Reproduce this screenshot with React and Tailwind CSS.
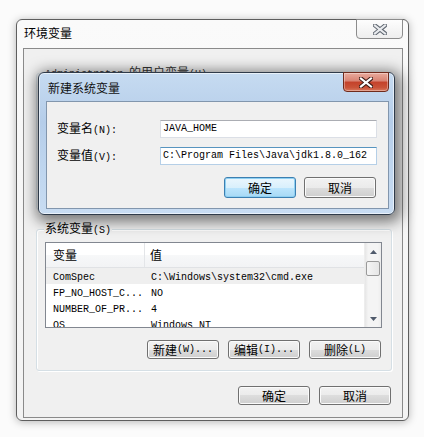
import React from "react";

function M({ children }) {
  return <span className="font-['Liberation_Mono',monospace] text-[10px]">{children}</span>;
}

function XGlyph({ light }) {
  return (
    <svg width="14" height="11" viewBox="0 0 14 11">
      <path d="M2 1.5 L12 9.5 M12 1.5 L2 9.5" stroke={light ? "#5f6670" : "#3b1a14"} strokeWidth="4.2" strokeLinecap="square" fill="none" />
      <path d="M2 1.5 L12 9.5 M12 1.5 L2 9.5" stroke={light ? "#e9ebee" : "#ffffff"} strokeWidth="2.2" strokeLinecap="square" fill="none" />
    </svg>
  );
}

function Arrow({ down }) {
  return (
    <svg width="7" height="4" viewBox="0 0 7 4">
      <path d={down ? "M0 0 L7 0 L3.5 4 Z" : "M0 4 L3.5 0 L7 4 Z"} fill="#4f5a6b" />
    </svg>
  );
}

function Btn({ children, w = "w-[72px]", h = "h-[19px]", primary }) {
  return (
    <div
      className={
        primary
          ? `${w} ${h} flex items-center justify-center rounded-[3px] border border-[#3c7fb1] bg-[linear-gradient(#eaf6fd_0%,#d9f0fc_50%,#bee6fd_50%,#a7d9f5_100%)] shadow-[inset_0_0_0_1px_#8fd0f2]`
          : `${w} ${h} flex items-center justify-center rounded-[3px] border border-[#707070] bg-[linear-gradient(#f2f2f2_0%,#ebebeb_50%,#dddddd_50%,#cfcfcf_100%)] shadow-[inset_0_0_0_1px_#fbfbfb]`
      }
    >
      {children}
    </div>
  );
}

const rows = [
  ["ComSpec", "C:\\Windows\\system32\\cmd.exe"],
  ["FP_NO_HOST_C...", "NO"],
  ["NUMBER_OF_PR...", "4"],
  ["OS", "Windows_NT"],
];

export default function App() {
  return (
    <div className="w-[424px] h-[437px] bg-[#fbfbfb] relative overflow-hidden pt-[19px] pl-[16px] font-['Noto_Sans_CJK_SC',sans-serif] text-[12px] leading-[14px] text-black">
      {/* 环境变量 window */}
      <div className="w-[393px] h-[402px] border border-[#5e5e5e] rounded-[6px] bg-[linear-gradient(#fafafa,#f3f3f3)] shadow-[0_1px_8px_rgba(0,0,0,0.28)] flex flex-col">
        <div className="h-[28px] flex justify-between shrink-0">
          <span className="pl-[7px] pt-[6px]">环境变量</span>
          <div className="mt-[-1px] mr-[5px] w-[47px] h-[20px] border border-[#8c8c8c] rounded-b-[4px] flex items-center justify-center bg-[linear-gradient(#fdfdfd,#eeeeee)]">
            <XGlyph light />
          </div>
        </div>
        <div className="ml-[6px] w-[380px] h-[370px] border border-[#8a8a8a] bg-[#f0f0f0] flex flex-col">
          {/* user variables group (mostly hidden) */}
          <div className="relative ml-[12px] mt-[24px] w-[356px] h-[137px] border border-[#d5dfe5] rounded-[3px] shrink-0">
            <span className="absolute left-[7px] top-[-9px] bg-[#f0f0f0] px-[1px] text-[#333]">
              <M>Administrator </M>的用户变量<M>(U)</M>
            </span>
          </div>

          {/* system variables group */}
          <div className="relative ml-[12px] mt-[19px] w-[356px] h-[142px] border border-[#d5dfe5] rounded-[3px] shadow-[inset_1px_1px_0_#ffffff,1px_1px_0_#ffffff] shrink-0">
            <span className="absolute left-[7px] top-[-9px] bg-[#f0f0f0] px-[1px]">
              系统变量<M>(S)</M>
            </span>
            <div className="ml-[8px] mt-[12px] w-[337px] h-[86px] border border-[#828790] bg-white flex overflow-hidden">
              <div className="flex-1 flex flex-col">
                <div className="h-[25px] shrink-0 flex border-b border-[#e0e2e5] bg-[linear-gradient(#ffffff_0%,#ffffff_50%,#f7f8f9_50%,#f2f3f5_100%)]">
                  <div className="w-[99px] pl-[7px] flex items-center border-r border-[#e3e5e8]">变量</div>
                  <div className="pl-[5px] flex items-center">值</div>
                </div>
                {rows.map((r, i) => (
                  <div key={r[0]} className={`h-[16px] shrink-0 flex items-center ${i === 0 ? "bg-[#efefef]" : ""}`}>
                    <div className="w-[99px] pl-[7px]">
                      <M>{r[0]}</M>
                    </div>
                    <div className="pl-[6px]">
                      <M>{r[1]}</M>
                    </div>
                  </div>
                ))}
              </div>
              <div className="w-[17px] flex flex-col bg-[linear-gradient(90deg,#e6e6e6,#f4f4f4_20%,#f4f4f4_80%,#ececec)] border-l border-[#ededed]">
                <div className="h-[17px] flex items-center justify-center">
                  <Arrow />
                </div>
                <div className="mx-[1px] mt-[1px] h-[15px] border border-[#9a9a9a] rounded-[2px] bg-[linear-gradient(90deg,#f5f5f5,#e6e6e6)]" />
                <div className="flex-1" />
                <div className="h-[17px] flex items-center justify-center">
                  <Arrow down />
                </div>
              </div>
            </div>
            <div className="flex justify-end gap-[9px] mt-[12px] mr-[10px]">
              <Btn>
                新建<M>(W)...</M>
              </Btn>
              <Btn>
                编辑<M>(I)...</M>
              </Btn>
              <Btn>
                删除<M>(L)</M>
              </Btn>
            </div>
          </div>

          <div className="flex justify-end gap-[9px] mt-[15px] mr-[11px]">
            <Btn>确定</Btn>
            <Btn>取消</Btn>
          </div>
        </div>
      </div>

      {/* 新建系统变量 dialog, on top */}
      <div className="absolute left-[38px] top-[72px] w-[357px] h-[143px] rounded-[6px] border border-[#2f3b4a] bg-[linear-gradient(180deg,#c6dbf1_0%,#b5cde9_35%,#bed5ee_65%,#c8dcf2_100%)] shadow-[2px_3px_14px_4px_rgba(0,0,0,0.5),inset_0_0_0_1px_rgba(255,255,255,0.6)] flex flex-col">
        <div className="h-[28px] flex justify-between shrink-0">
          <span className="pl-[9px] pt-[8px] text-[#111]">新建系统变量</span>
          <div className="mt-[-1px] mr-[5px] w-[46px] h-[20px] border border-[#6f2a1c] rounded-b-[4px] flex items-center justify-center bg-[linear-gradient(#e9ab9d_0%,#d88272_45%,#c4412a_50%,#c95238_80%,#d8775c_100%)] shadow-[inset_0_0_0_1px_rgba(255,255,255,0.35)]">
            <XGlyph />
          </div>
        </div>
        <div className="ml-[7px] w-[343px] h-[108px] border border-[#8296ad] bg-[#f0f0f0] flex flex-col">
          <div className="mt-[18px] flex items-center pl-[10px]">
            <div className="w-[103px]">
              变量名<M>(N):</M>
            </div>
            <div className="w-[217px] h-[18px] border border-[#dbdfe6] border-t-[#abadb3] bg-white flex items-center pl-[2px]">
              <M>JAVA_HOME</M>
            </div>
          </div>
          <div className="mt-[9px] flex items-center pl-[10px]">
            <div className="w-[103px]">
              变量值<M>(V):</M>
            </div>
            <div className="w-[217px] h-[18px] border border-[#b5cfe7] border-t-[#5794bf] bg-white flex items-center pl-[2px]">
              <M>C:\Program Files\Java\jdk1.8.0_162</M>
            </div>
          </div>
          <div className="mt-[12px] flex justify-end gap-[8px] mr-[12px]">
            <Btn h="h-[21px]" primary>
              确定
            </Btn>
            <Btn h="h-[21px]">取消</Btn>
          </div>
        </div>
      </div>
    </div>
  );
}
